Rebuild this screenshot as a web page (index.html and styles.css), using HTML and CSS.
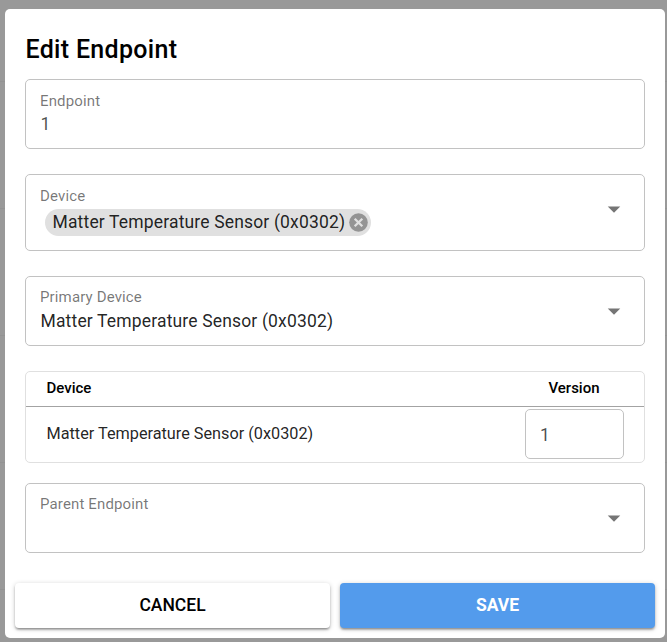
FILE: index.html
```html
<!DOCTYPE html>
<html lang="en">
<head>
<meta charset="utf-8">
<title>Edit Endpoint</title>
<link rel="stylesheet" href="styles.css">
</head>
<body>
<main class="dialog">
  <h1 class="title">Edit Endpoint</h1>
  <div class="form">
    <div class="field first">
      <div class="content">
        <div class="label">Endpoint</div>
        <div class="value muted">1</div>
      </div>
    </div>
    <div class="field chips">
      <div class="content">
        <div class="label">Device</div>
        <div class="chip"><span class="chip-text">Matter Temperature Sensor (0x0302)</span><svg class="remove" viewBox="0 0 20 20"><circle cx="10" cy="10" r="9.8"/><path d="M6 6l8 8M14 6l-8 8"/></svg></div>
      </div>
      <svg class="arrow" viewBox="0 0 24 24"><path d="M7 10l5 5 5-5z"/></svg>
    </div>
    <div class="field">
      <div class="content">
        <div class="label">Primary Device</div>
        <div class="value">Matter Temperature Sensor (0x0302)</div>
      </div>
      <svg class="arrow" viewBox="0 0 24 24"><path d="M7 10l5 5 5-5z"/></svg>
    </div>
    <div class="table">
      <div class="row head"><span>Device</span><span class="version">Version</span></div>
      <div class="row"><span class="device">Matter Temperature Sensor (0x0302)</span><div class="input">1</div></div>
    </div>
    <div class="field parent">
      <div class="content"><div class="label">Parent Endpoint</div></div>
      <svg class="arrow" viewBox="0 0 24 24"><path d="M7 10l5 5 5-5z"/></svg>
    </div>
  </div>
  <div class="actions">
    <button class="button">CANCEL</button>
    <button class="button primary">SAVE</button>
  </div>
</main>
</body>
</html>
```
FILE: styles.css
```css
* { box-sizing: border-box; }
body {
  margin: 0;
  height: 642px;
  overflow: hidden;
  padding: 9px 2px 4px 5px;
  background: repeating-linear-gradient(#999 0 62.5px, #939393 62.5px 63.5px) 0 -45px / 100% 700px;
  font-family: Roboto, "Liberation Sans", sans-serif;
  color: rgba(0, 0, 0, .87);
}
.dialog {
  height: 629px;
  background: #fff;
  border-radius: 5px;
  padding: 21px 10px 10px;
}
.title {
  margin: 0 10.5px 9px;
  font-size: 25px;
  line-height: 40px;
  font-weight: 500;
  letter-spacing: .31px;
  color: #000;
}
.form { padding: 0 10px; }
.field {
  display: flex;
  align-items: center;
  height: 70px;
  margin-bottom: 25px;
  padding: 0 15px 0 14px;
  border: 1px solid #c2c2c2;
  border-radius: 5px;
}
.content { flex: 1; align-self: stretch; padding-top: 10px; }
.first .content, .chips .content { padding-top: 11px; }
.label {
  font-size: 15px;
  line-height: 20px;
  letter-spacing: .14px;
  color: rgba(0, 0, 0, .54);
}
.value {
  font-size: 17.5px;
  line-height: 28px;
  letter-spacing: .16px;
  padding-left: .5px;
}
.first .value { line-height: 26px; }
.muted { color: rgba(0, 0, 0, .7); }
.field.chips { height: 77px; }
.chip {
  display: inline-flex;
  align-items: center;
  height: 27px;
  margin: 3px 0 0 5px;
  padding: 0 3px 0 7.5px;
  border-radius: 14px;
  background: #e0e0e0;
  font-size: 17.5px;
  letter-spacing: .16px;
}
.chip-text { line-height: 25px; }
.remove {
  width: 19px;
  height: 19px;
  margin: -1px 0 0 4px;
  fill: #949494;
  stroke: none;
}
.remove path { stroke: #e0e0e0; stroke-width: 2.4; }
.arrow { width: 30px; height: 30px; fill: #757575; }
.chips .arrow { margin-top: -8px; }
.table {
  height: 92px;
  margin-bottom: 20px;
  border: 1px solid #e0e0e0;
  border-radius: 5px;
}
.row {
  display: flex;
  align-items: center;
  justify-content: space-between;
  height: 54px;
  padding: 0 20px 0 20.5px;
}
.row.head {
  height: 35px;
  padding-bottom: 2px;
  border-bottom: 1px solid #a3a3a3;
  font-size: 15px;
  font-weight: 500;
  color: #000;
}
.version { width: 99px; padding-right: 1px; text-align: center; }
.device { padding-bottom: 2px; font-size: 16.25px; }
.input {
  width: 99px;
  height: 50px;
  padding-left: 14px;
  border: 1px solid #c2c2c2;
  border-radius: 5px;
  font-size: 17.5px;
  line-height: 50px;
  color: rgba(0, 0, 0, .7);
}
.field.parent { margin-bottom: 30px; }
.actions { display: flex; gap: 10px; }
.button {
  flex: 1;
  height: 45px;
  padding: 0 0 1px;
  border: 0;
  border-radius: 4px;
  background: #fff;
  color: #000;
  font: 500 17.5px/44px Roboto, "Liberation Sans", sans-serif;
  box-shadow: 0 1px 5px rgba(0, 0, 0, .2), 0 2px 2px rgba(0, 0, 0, .24), 0 3px 1px -2px rgba(0, 0, 0, .12);
}
.primary { background: #539bec; color: #fff; font-weight: 700; }
```
